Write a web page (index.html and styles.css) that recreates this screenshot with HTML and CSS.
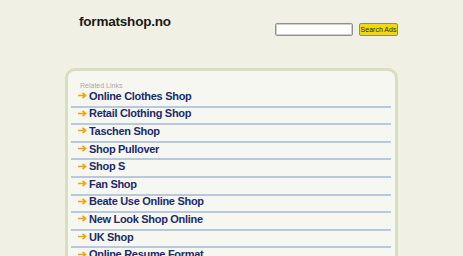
FILE: index.html
```html
<!DOCTYPE html>
<html lang="en">
<head>
    <meta charset="UTF-8">
    <title>formatshop.no</title>
    <link rel="stylesheet" href="styles.css">
</head>
<body>
<div class="wrap">
    <div class="header">
        <div class="logo">formatshop.no</div>
        <form class="search">
            <input class="search-input" type="text">
            <button class="search-btn" type="button">Search Ads</button>
        </form>
    </div>
    <div class="panel">
        <p class="related">Related Links</p>
        <ul class="links">
            <li><span class="arrow"><svg width="9" height="7" viewBox="0 0 9 7"><path d="M0 3.5H7M4.5 0.8L7.6 3.5L4.5 6.2" fill="none" stroke="#f2a400" stroke-width="1.6"/></svg></span><a href="#">Online Clothes Shop</a></li>
            <li><span class="arrow"><svg width="9" height="7" viewBox="0 0 9 7"><path d="M0 3.5H7M4.5 0.8L7.6 3.5L4.5 6.2" fill="none" stroke="#f2a400" stroke-width="1.6"/></svg></span><a href="#">Retail Clothing Shop</a></li>
            <li><span class="arrow"><svg width="9" height="7" viewBox="0 0 9 7"><path d="M0 3.5H7M4.5 0.8L7.6 3.5L4.5 6.2" fill="none" stroke="#f2a400" stroke-width="1.6"/></svg></span><a href="#">Taschen Shop</a></li>
            <li><span class="arrow"><svg width="9" height="7" viewBox="0 0 9 7"><path d="M0 3.5H7M4.5 0.8L7.6 3.5L4.5 6.2" fill="none" stroke="#f2a400" stroke-width="1.6"/></svg></span><a href="#">Shop Pullover</a></li>
            <li><span class="arrow"><svg width="9" height="7" viewBox="0 0 9 7"><path d="M0 3.5H7M4.5 0.8L7.6 3.5L4.5 6.2" fill="none" stroke="#f2a400" stroke-width="1.6"/></svg></span><a href="#">Shop S</a></li>
            <li><span class="arrow"><svg width="9" height="7" viewBox="0 0 9 7"><path d="M0 3.5H7M4.5 0.8L7.6 3.5L4.5 6.2" fill="none" stroke="#f2a400" stroke-width="1.6"/></svg></span><a href="#">Fan Shop</a></li>
            <li><span class="arrow"><svg width="9" height="7" viewBox="0 0 9 7"><path d="M0 3.5H7M4.5 0.8L7.6 3.5L4.5 6.2" fill="none" stroke="#f2a400" stroke-width="1.6"/></svg></span><a href="#">Beate Use Online Shop</a></li>
            <li><span class="arrow"><svg width="9" height="7" viewBox="0 0 9 7"><path d="M0 3.5H7M4.5 0.8L7.6 3.5L4.5 6.2" fill="none" stroke="#f2a400" stroke-width="1.6"/></svg></span><a href="#">New Look Shop Online</a></li>
            <li><span class="arrow"><svg width="9" height="7" viewBox="0 0 9 7"><path d="M0 3.5H7M4.5 0.8L7.6 3.5L4.5 6.2" fill="none" stroke="#f2a400" stroke-width="1.6"/></svg></span><a href="#">UK Shop</a></li>
            <li><span class="arrow"><svg width="9" height="7" viewBox="0 0 9 7"><path d="M0 3.5H7M4.5 0.8L7.6 3.5L4.5 6.2" fill="none" stroke="#f2a400" stroke-width="1.6"/></svg></span><a href="#">Online Resume Format</a></li>
        </ul>
    </div>
</div>
</body>
</html>
```

FILE: styles.css
```css
body{
    margin: 0;
    background-color: #f0f1e4;
    font-family: "Liberation Sans", Arial, sans-serif;
    overflow: hidden;
}

.wrap{
    width: 333px;
    margin-left: 65px;
}

/* top bar */
.header{
    display: flex;
    height: 68px;
}

.logo{
    margin: 13px 0 0 14px;
    font-size: 13.5px;
    line-height: 17px;
    letter-spacing: -0.2px;
    font-weight: bold;
    color: #1c1a16;
}

.search{
    display: flex;
    gap: 6px;
    margin: 23px 0 0 auto;
}

.search-input{
    box-sizing: border-box;
    width: 78px;
    height: 13px;
    padding: 0;
    border: 1px solid #8f8f8f;
    border-radius: 2px;
    background-color: #fff;
    box-shadow: inset 0 0 0 1px #cfcfcf;
}

.search-btn{
    box-sizing: border-box;
    width: 39px;
    height: 13px;
    padding: 0;
    border: 1px solid #8c8c78;
    border-radius: 2px;
    background-color: #f4d808;
    font-family: "Liberation Sans", Arial, sans-serif;
    font-size: 7px;
    line-height: 11px;
    color: #2e2a14;
}

/* related links box */
.panel{
    border: 3px solid #d8dfbf;
    border-bottom: none;
    border-radius: 10px 10px 0 0;
    background-color: #f7f7f1;
    padding: 0 4px 0 3px;
    height: 200px;
}

.related{
    margin: 10px 0 0 9px;
    font-size: 7px;
    line-height: 9px;
    color: #a9a9a4;
}

.links{
    list-style: none;
    margin: 0;
    padding: 0;
}

.links li{
    box-sizing: border-box;
    display: flex;
    align-items: center;
    height: 17.6px;
    padding: 0 0 4px 7px;
    border-bottom: 2px solid #b9c8da;
}

.arrow{
    display: flex;
    width: 11px;
}

.links a{
    font-size: 11px;
    letter-spacing: -0.3px;
    font-weight: bold;
    color: #1b2a6e;
    text-decoration: none;
}
```
